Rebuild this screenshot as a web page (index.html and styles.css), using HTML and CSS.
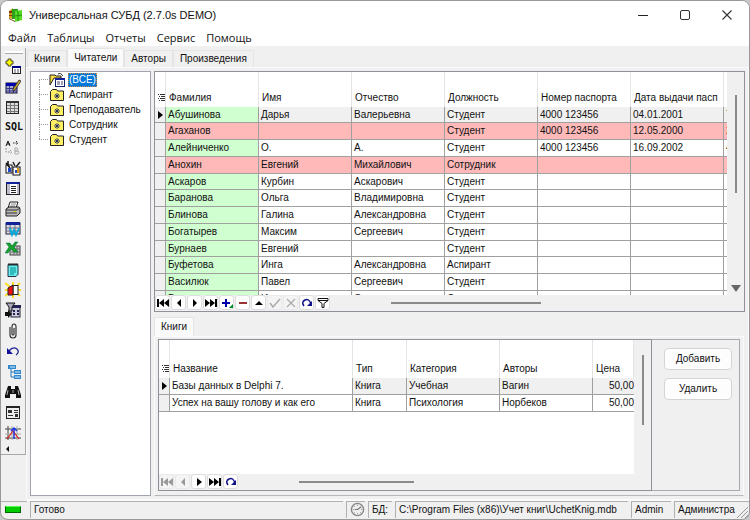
FILE: index.html
```html
<!DOCTYPE html>
<html lang="ru">
<head>
<meta charset="utf-8">
<title>Универсальная СУБД</title>
<link rel="stylesheet" href="styles.css">
</head>
<body>
<div class="window">
  <header class="titlebar">
    <svg class="app-icon" viewBox="0 0 14 14"><path d="M0 3 4 0v11L0 10z" fill="#c9a21a"/><path d="M0 3h4v2H0zM0 7h4v1H0z" fill="#8a2f10"/><path d="M3 1h6v10H3z" fill="#2aa01c"/><path d="M6 3 13 2v10l-7 2z" fill="#55dd22"/><path d="M9 3v10M6 8l7-1" stroke="#1e8a16" stroke-width="1"/><path d="M0 10l6 3v1L0 11z" fill="#7b4a10"/></svg>
    <h1>Универсальная СУБД (2.7.0s DEMO)</h1>
    <div class="window-buttons">
      <button aria-label="Свернуть"><svg viewBox="0 0 10 10"><path d="M0 5.500h10" stroke="#222"/></svg></button>
      <button aria-label="Развернуть"><svg viewBox="0 0 10 10"><rect x=".5" y=".5" width="9" height="9" rx="1.500" fill="none" stroke="#333"/></svg></button>
      <button aria-label="Закрыть"><svg viewBox="0 0 10 10"><path d="M.5.5l9 9M9.500.5l-9 9" stroke="#333" stroke-width="1.100"/></svg></button>
    </div>
  </header>
  <nav class="menu"><button>Файл</button><button>Таблицы</button><button>Отчеты</button><button>Сервис</button><button>Помощь</button></nav>
  <div class="workspace">
    <aside class="toolbar">
      <button aria-label="Добавить запись"><svg viewBox="0 0 16 16"><path d="M3 1h3v2h2v3H6v2H3V6H1V3h2z" fill="#ff0" stroke="#222" stroke-width=".8"/><rect x="7.500" y="8.500" width="8" height="7" fill="#fff" stroke="#222"/><path d="M7 8h9v2H7z" fill="#008"/><path d="M9 12h2M12 12h2M9 14h2M12 14h2" stroke="#556"/></svg></button>
      <button aria-label="Изменить запись"><svg viewBox="0 0 16 16"><rect x="1" y="4" width="11" height="10" fill="#aac" stroke="#113"/><path d="M1 4h11v3H1z" fill="#00a"/><path d="M1 9.500h11M1 12h11M4.500 7v7M8.500 7v7" stroke="#338"/><path d="M8 10 14 1l2 1-6 9-2 1z" fill="#ca3" stroke="#222" stroke-width=".8"/></svg></button>
      <button aria-label="Таблица"><svg viewBox="0 0 16 16"><rect x="1.500" y="2.500" width="12" height="12" fill="#ddd" stroke="#222"/><path d="M1 2h13v2H1z" fill="#333"/><path d="M2 6.500h11M2 9.500h11M2 12.500h11M5.500 4v10M9.500 4v10" stroke="#777"/></svg></button>
      <button class="sql">SQL</button>
      <button aria-label="Замена"><svg viewBox="0 0 16 16"><path d="M1 6 3 1l2 5M2 4h3" fill="none" stroke="#111"/><path d="M8 3h5M11 1l2 2-2 2" stroke="#333" fill="none" stroke-dasharray="1.500 1"/><path d="M1 8v4h5M5 10l2 2-2 2" stroke="#999" fill="none" stroke-dasharray="2 1"/><path d="M10 8v6h3q2-2 0-3h-3 2q2-1 0-3z" fill="none" stroke="#aaa"/></svg></button>
      <button aria-label="Импорт"><svg viewBox="0 0 16 16"><rect x="1" y="5" width="6" height="8" fill="#fff" stroke="#111"/><rect x="8" y="7" width="7" height="8" fill="#fff" stroke="#111"/><path d="M3 1v5M1 3l4 5" stroke="#111" stroke-width="1.500"/><path d="M3 8h3v4H3zM10 10h2v3h-2z" fill="#24c"/><path d="M12 8h2v5h-2z" fill="#d90"/><path d="M8 2l2 4M15 2l-4 5" stroke="#222" stroke-width="1.500"/></svg></button>
      <button aria-label="Форма"><svg viewBox="0 0 16 16"><rect x="1.500" y="2.500" width="13" height="12" fill="#fff" stroke="#222"/><path d="M1 2h14v2H1z" fill="#129"/><path d="M2 4h3v10H2zM12 4h2v10h-2z" fill="#bbc"/><path d="M6 6.500h5M6 8.500h5M6 10.500h5M6 12.500h5" stroke="#222"/></svg></button>
      <button aria-label="Печать"><svg viewBox="0 0 16 16"><path d="M5 1h8l-2 6H3z" fill="#fff" stroke="#222"/><path d="M6 3h5M5 5h5" stroke="#888"/><path d="M1 8l3-2h10l1 2v4l-3 3H1z" fill="#bbb" stroke="#222"/><path d="M1 9h11l3-2M1 12h11" stroke="#333" fill="none"/><path d="M9 10h2v1H9z" fill="#cc0"/></svg></button>
      <button aria-label="Экспорт в Word"><svg viewBox="0 0 16 16"><rect x="1" y="2" width="14" height="11" fill="#ddd" stroke="#224"/><path d="M1 1h14v3H1z" fill="#129"/><path d="M1 7h14M1 10h14M5 4v9M10 4v9" stroke="#668"/><path d="M5 7l2 7 2-5 2 5 3-7" fill="none" stroke="#0ad" stroke-width="1.800"/></svg></button>
      <button aria-label="Экспорт в Excel"><svg viewBox="0 0 16 16"><rect x="5" y="5" width="10" height="9" fill="#ccc" stroke="#444"/><path d="M6 8h9M6 11h9M9 5v9M12 5v9" stroke="#666"/><path d="M1 2h4l2 3 3-4h3L9 6l4 5H9L6 8l-3 4H0l4-6z" fill="#17a02b" stroke="#074" stroke-width=".5"/></svg></button>
      <button aria-label="Блокнот"><svg viewBox="0 0 16 16"><path d="M3 2.500h10v10l-2 2H3z" fill="#6ee" stroke="#234"/><path d="M5 6h6M5 8h6M5 10h6M5 12h4" stroke="#088"/><path d="M4 1v3M6 1v3M8 1v3M10 1v3M12 1v3" stroke="#222"/></svg></button>
      <button aria-label="Выход"><svg viewBox="0 0 16 16"><path d="M0 1l5 4M15 1l-3 3M0 14l4-3M15 14l-3-3M0 8h3M13 8h3M8 0v3M8 16v-3" stroke="#fd2" stroke-width="2"/><rect x="8" y="3.500" width="5" height="9" fill="#fff" stroke="#222"/><path d="M3 6l5-3v10H3z" fill="#e11" stroke="#222"/></svg></button>
      <button aria-label="Фильтр"><svg viewBox="0 0 16 16"><rect x="6" y="4" width="9" height="11" fill="#ccd" stroke="#223"/><path d="M6 3h10v3H6z" fill="#225"/><path d="M8 9h2M12 9h2M8 12h2M12 12h2" stroke="#225" stroke-width="2"/><path d="M1 1h9L7 5v4H4V5z" fill="#aab" stroke="#111"/><path d="M0 10h3V8l4 4-4 4v-2H0z" fill="#111"/></svg></button>
      <button aria-label="Вложение"><svg viewBox="0 0 16 16"><path d="M5 4v8q0 3 3 3t3-3V4q0-3-2-3T7 4v7q0 1 1 1t1-1V5" fill="none" stroke="#333" stroke-width="1.200"/></svg></button>
      <button aria-label="Отменить"><svg viewBox="0 0 16 16"><path d="M4 8q4-5 8-2 3 3-1 6" fill="none" stroke="#229" stroke-width="1.300"/><path d="M2 5v6h6z" fill="#119"/></svg></button>
      <button aria-label="Дерево"><svg viewBox="0 0 16 16"><path d="M6 3v10h3M6 8h3" fill="none" stroke="#27b"/><path d="M3 1h8v4H3zM9 6h7v4H9zM9 11h7v4H9z" fill="#38c"/><path d="M5 3h5M10 8h5M10 13h5" stroke="#cef"/></svg></button>
      <button aria-label="Найти"><svg viewBox="0 0 16 16"><path d="M3 2h3v3h4V2h3l3 9v3h-5v-4H5v4H0v-3z" fill="#111"/><path d="M3 6l-1 5M13 6l1 5M8 6v3" stroke="#aaa"/></svg></button>
      <button aria-label="Свойства"><svg viewBox="0 0 16 16"><rect x="1.500" y="2.500" width="13" height="12" fill="#eee" stroke="#222"/><path d="M1 2h14v2H1z" fill="#222"/><path d="M3 6h4v3H3z" fill="#333"/><path d="M9 6.500h4M9 8.500h4M3 11.500h5" stroke="#333"/><path d="M10 10h3v3h-3z" fill="#333"/></svg></button>
      <button aria-label="График"><svg viewBox="0 0 16 16"><path d="M3 1v14M0 4h16M0 13h16" stroke="#444"/><path d="M0 9h16M7 1v14M12 1v14" stroke="#aaa"/><path d="M2 14l6-8 6 8" fill="none" stroke="#d22" stroke-width="1.200"/><path d="M9 3v11M6 6l3-3 3 3" stroke="#23d" stroke-width="1.500" fill="none"/></svg></button>
      <button class="more" aria-label="Ещё"><svg viewBox="0 0 16 8"><path d="M4 1v6L1 4z" fill="#111"/></svg></button>
    </aside>
    <main class="main">
      <div class="tabs" role="tablist"><button role="tab">Книги</button><button role="tab" class="active" aria-selected="true">Читатели</button><button role="tab">Авторы</button><button role="tab">Произведения</button></div>
      <div class="page">
        <ul class="tree">
          <li class="selected"><svg viewBox="0 0 16 14"><path d="M1 12V2h5l1 1h5v2H5z" fill="#fd4" stroke="#222"/><path d="M9 1q3-2 4 1l1 1" fill="none" stroke="#333"/><rect x="6.500" y="5.500" width="9" height="8" fill="#fff" stroke="#126"/><path d="M6 5h10v2H6z" fill="#129"/><path d="M8 9h3M12 9h2M8 11h3M12 11h2" stroke="#447"/></svg><span>(ВСЕ)</span></li>
          <li><svg viewBox="0 0 16 14"><path d="M1.500 12.500v-9l2-2h4l1 1.500h6v9.500z" fill="#ffef62" stroke="#222"/><path d="M8 5v6M5 8h6M6 6l4 4M10 6l-4 4" stroke="#126" stroke-width=".8"/></svg><span>Аспирант</span></li>
          <li><svg viewBox="0 0 16 14"><path d="M1.500 12.500v-9l2-2h4l1 1.500h6v9.500z" fill="#ffef62" stroke="#222"/><path d="M8 5v6M5 8h6M6 6l4 4M10 6l-4 4" stroke="#126" stroke-width=".8"/></svg><span>Преподаватель</span></li>
          <li><svg viewBox="0 0 16 14"><path d="M1.500 12.500v-9l2-2h4l1 1.500h6v9.500z" fill="#ffef62" stroke="#222"/><path d="M8 5v6M5 8h6M6 6l4 4M10 6l-4 4" stroke="#126" stroke-width=".8"/></svg><span>Сотрудник</span></li>
          <li><svg viewBox="0 0 16 14"><path d="M1.500 12.500v-9l2-2h4l1 1.500h6v9.500z" fill="#ffef62" stroke="#222"/><path d="M8 5v6M5 8h6M6 6l4 4M10 6l-4 4" stroke="#126" stroke-width=".8"/></svg><span>Студент</span></li>
        </ul>
        <div class="content">
          <section class="grid readers">
            <div class="viewport">
              <table>
                <colgroup><col class="mark"><col><col><col><col><col><col><col></colgroup>
                <thead><tr><th><svg class="rows-icon" viewBox="0 0 7 9"><path d="M0 1.500h1M2 1.500h5M1 3.500h1M3 3.500h4M0 5.500h1M2 5.500h5M1 7.500h1M3 7.500h4" stroke="#333"/></svg></th><th>Фамилия</th><th>Имя</th><th>Отчество</th><th>Должность</th><th>Номер паспорта</th><th>Дата выдачи пасп</th><th></th></tr></thead>
                <tbody>
                  <tr class="current"><td><svg class="pointer" viewBox="0 0 5 8"><path d="M0 0l5 4-5 4z"/></svg></td><td>Абушинова</td><td>Дарья</td><td>Валерьевна</td><td>Студент</td><td>4000 123456</td><td>04.01.2001</td><td>7</td></tr>
                  <tr class="debt"><td></td><td>Агаханов</td><td></td><td></td><td>Студент</td><td>4000 123456</td><td>12.05.2000</td><td>2</td></tr>
                  <tr><td></td><td>Алейниченко</td><td>О.</td><td>А.</td><td>Студент</td><td>4000 123456</td><td>16.09.2002</td><td>4</td></tr>
                  <tr class="debt"><td></td><td>Анохин</td><td>Евгений</td><td>Михайлович</td><td>Сотрудник</td><td></td><td></td><td></td></tr>
                  <tr><td></td><td>Аскаров</td><td>Курбин</td><td>Аскарович</td><td>Студент</td><td></td><td></td><td></td></tr>
                  <tr><td></td><td>Баранова</td><td>Ольга</td><td>Владимировна</td><td>Студент</td><td></td><td></td><td></td></tr>
                  <tr><td></td><td>Блинова</td><td>Галина</td><td>Александровна</td><td>Студент</td><td></td><td></td><td></td></tr>
                  <tr><td></td><td>Богатырев</td><td>Максим</td><td>Сергеевич</td><td>Студент</td><td></td><td></td><td></td></tr>
                  <tr><td></td><td>Бурнаев</td><td>Евгений</td><td></td><td>Студент</td><td></td><td></td><td></td></tr>
                  <tr><td></td><td>Буфетова</td><td>Инга</td><td>Александровна</td><td>Аспирант</td><td></td><td></td><td></td></tr>
                  <tr><td></td><td>Василюк</td><td>Павел</td><td>Сергеевич</td><td>Студент</td><td></td><td></td><td></td></tr>
                  <tr><td></td><td>Власова</td><td>Ирина</td><td>Олеговна</td><td>Студент</td><td></td><td></td><td></td></tr>
                </tbody>
              </table>
            </div>
            <div class="vscroll"><span class="thumb"></span><span class="down"></span></div>
            <div class="navigator">
              <button aria-label="Первая"><svg viewBox="0 0 12 10"><path d="M1 1v8" stroke="#000" stroke-width="2"/><path d="M7 1v8L2 5zM12 1v8L7 5z"/></svg></button>
              <button aria-label="Предыдущая"><svg viewBox="0 0 12 10"><path d="M8 1v8L4 5z"/></svg></button>
              <button aria-label="Следующая"><svg viewBox="0 0 12 10"><path d="M4 1v8l4-4z"/></svg></button>
              <button aria-label="Последняя"><svg viewBox="0 0 12 10"><path d="M11 1v8" stroke="#000" stroke-width="2"/><path d="M0 1v8l5-4zM5 1v8l5-4z"/></svg></button>
              <button aria-label="Добавить"><svg viewBox="0 0 12 10"><path d="M5 1v8M1 5h8" stroke="#00a" stroke-width="2"/><path d="M12 6v4H8z" fill="#082"/></svg></button>
              <button aria-label="Удалить"><svg viewBox="0 0 12 10"><path d="M2 5h8" stroke="#933" stroke-width="2"/></svg></button>
              <button aria-label="Изменить"><svg viewBox="0 0 12 10"><path d="M2 7l4-4 4 4z"/></svg></button>
              <button aria-label="Сохранить" disabled><svg viewBox="0 0 12 10"><path d="M1 5l3 4 7-8" fill="none" stroke="#aaa" stroke-width="1.500"/></svg></button>
              <button aria-label="Отменить" disabled><svg viewBox="0 0 12 10"><path d="M2 1l8 8M10 1L2 9" stroke="#aaa" stroke-width="1.200"/></svg></button>
              <button aria-label="Обновить"><svg viewBox="0 0 12 10"><path d="M3 8Q0 4 4 2t6 4" fill="none" stroke="#118" stroke-width="1.500"/><path d="M11 3v5H6z" fill="#118"/></svg></button>
              <button aria-label="Фильтр"><svg viewBox="0 0 12 10"><path d="M1 .5h10v2l-4 3v4H5v-4l-4-3zM1 2.500h10" fill="#fff" stroke="#111"/></svg></button>
              <div class="hscroll"><span></span></div>
            </div>
          </section>
          <section class="details">
            <div class="tabs" role="tablist"><button role="tab" class="active" aria-selected="true">Книги</button></div>
            <div class="details-page">
              <div class="grid books">
                <div class="viewport">
                  <table>
                    <colgroup><col class="mark"><col class="c-name"><col class="c-type"><col><col><col class="c-price"></colgroup>
                    <thead><tr><th><svg class="rows-icon" viewBox="0 0 7 9"><path d="M0 1.500h1M2 1.500h5M1 3.500h1M3 3.500h4M0 5.500h1M2 5.500h5M1 7.500h1M3 7.500h4" stroke="#333"/></svg></th><th>Название</th><th>Тип</th><th>Категория</th><th>Авторы</th><th>Цена</th></tr></thead>
                    <tbody>
                      <tr class="current"><td><svg class="pointer" viewBox="0 0 5 8"><path d="M0 0l5 4-5 4z"/></svg></td><td>Базы данных в Delphi 7.</td><td>Книга</td><td>Учебная</td><td>Вагин</td><td>50,00</td></tr>
                      <tr><td></td><td>Успех на вашу голову и как его</td><td>Книга</td><td>Психология</td><td>Норбеков</td><td>50,00</td></tr>
                    </tbody>
                  </table>
                </div>
                <div class="vscroll"><span class="thumb"></span></div>
                <div class="navigator">
                  <button aria-label="Первая" disabled><svg viewBox="0 0 12 10"><path d="M1 1v8" stroke="#999" stroke-width="2"/><path d="M7 1v8L2 5zM12 1v8L7 5z" fill="#999"/></svg></button>
                  <button aria-label="Предыдущая" disabled><svg viewBox="0 0 12 10"><path d="M8 1v8L4 5z" fill="#999"/></svg></button>
                  <button aria-label="Следующая"><svg viewBox="0 0 12 10"><path d="M4 1v8l5-4z"/></svg></button>
                  <button aria-label="Последняя"><svg viewBox="0 0 12 10"><path d="M11 1v8" stroke="#000" stroke-width="2"/><path d="M0 1v8l5-4zM5 1v8l5-4z"/></svg></button>
                  <button aria-label="Обновить"><svg viewBox="0 0 12 10"><path d="M3 8Q0 4 4 2t6 4" fill="none" stroke="#118" stroke-width="1.500"/><path d="M11 3v5H6z" fill="#118"/></svg></button>
                  <div class="hscroll"><span></span></div>
                </div>
              </div>
              <div class="actions"><button>Добавить</button><button>Удалить</button></div>
            </div>
          </section>
        </div>
      </div>
    </main>
  </div>
  <footer class="status">
    <div class="s-led"><span class="led"></span></div>
    <div class="s-ready">Готово</div>
    <div class="s-clock"><svg viewBox="0 0 16 16"><circle cx="8" cy="8" r="6.500" fill="#eee" stroke="#888" stroke-width="1.500"/><path d="M8 8l4-3M8 8H5" stroke="#777" stroke-width="1.200"/><path d="M8 3v1M8 12v1M3 8h1M12 8h1M4.500 4.500l.7.7M11 11l.7.7M4.500 11.500l.7-.7" stroke="#888"/></svg></div>
    <div class="s-db">БД:</div>
    <div class="s-path">C:\Program Files (x86)\Учет книг\UchetKnig.mdb</div>
    <div class="s-user">Admin</div>
    <div class="s-role">Администра</div>
    <svg class="grip" viewBox="0 0 12 12"><path d="M1 12 12 1M5 12l7-7M9 12l3-3" stroke="#999"/></svg>
  </footer>
</div>
</body>
</html>
```
FILE: styles.css
```css
* { box-sizing: border-box; }
body {
  margin: 0;
  background: #c8c8c8;
  font: 10px/14px "Liberation Sans", Arial, sans-serif;
  color: #111;
}
button {
  margin: 0;
  padding: 0;
  border: 0;
  background: none;
  font: inherit;
  color: inherit;
}
svg { display: block; }

.window {
  display: flex;
  flex-direction: column;
  height: 100vh;
  border: 1px solid #999;
  border-radius: 8px;
  background: #f0f0f0;
  overflow: hidden;
}

.titlebar {
  display: flex;
  align-items: center;
  flex: none;
  height: 27px;
  padding-left: 8px;
  background: #fff;
}
.app-icon { width: 14px; height: 14px; }
.titlebar h1 {
  flex: 1;
  margin: 0 0 0 6px;
  font: 11px/16px "Liberation Sans", Arial, sans-serif;
}
.window-buttons { display: flex; padding-right: 1px; }
.window-buttons button { width: 42px; height: 26px; }
.window-buttons svg { width: 10px; height: 10px; margin: auto; }

.menu {
  display: flex;
  flex: none;
  gap: 11px;
  height: 18px;
  padding-left: 7px;
  background: #fff;
  font: 11px/20px "Open Sans", "Noto Sans", sans-serif;
}

.workspace { display: flex; flex: 1; min-height: 0; }
.toolbar {
  display: flex;
  flex-direction: column;
  justify-content: space-between;
  flex: none;
  width: 25px;
  margin: 2px 0 46px;
  padding: 8px 0 1px 4px;
  border: solid #a8a8a8;
  border-width: 0 1px 1px 0;
}
.toolbar::before {
  content: "";
  height: 2px;
  margin: -5px 2px 0 0;
  border-bottom: 1px solid #aaa;
  background: #fff;
}
.toolbar button { width: 16px; height: 16px; }
.toolbar .sql { width: 17px; font: bold 10px/16px "DejaVu Sans Mono", monospace; }
.toolbar .more { height: 8px; }

.main { display: flex; flex-direction: column; flex: 1; min-width: 0; }
.tabs { display: flex; align-items: flex-end; flex: none; height: 21px; padding: 0 1px; }
.tabs button {
  height: 17px;
  padding: 0 6px;
  border: 1px solid #e4e4e4;
  border-bottom: 0;
  background: #f0f0f0;
  line-height: 16px;
}
.tabs .active { height: 19px; padding: 0 6px; background: #fafafa; }

.page {
  display: flex;
  flex: 1;
  gap: 3px;
  min-height: 0;
  padding: 3px;
  border: solid #fafafa;
  border-width: 1px 1px 2px;
}
.tree {
  flex: none;
  width: 121px;
  margin: 0;
  padding: 0 0 0 8px;
  border: 1px solid #a0a4ac;
  background: #fff;
  list-style: none;
}
.tree li {
  display: flex;
  align-items: center;
  height: 15px;
  padding-left: 10px;
  background:
    repeating-linear-gradient(90deg, #999 0 1px, transparent 1px 2px) 0 7px / 10px 1px no-repeat,
    repeating-linear-gradient(180deg, #999 0 1px, transparent 1px 2px) 0 0 / 1px 100% no-repeat;
}
.tree li:first-child { background-position: 0 7px, 0 8px; }
.tree li:last-child { background-size: 10px 1px, 1px 8px; }
.tree svg { width: 16px; height: 14px; }
.tree span { padding: 0 1px; margin-left: 3px; line-height: 14px; }
.tree .selected span { background: #0078d7; color: #fff; outline: 1px dotted #c84; outline-offset: -1px; }

.content { display: flex; flex-direction: column; flex: 1; min-width: 0; }

.grid {
  display: grid;
  grid-template: minmax(0, 1fr) auto / minmax(0, 1fr) 17px;
  border: 1px solid #8e9198;
  background: #f0f0f0;
}
.readers { flex: 1; min-height: 0; }
.viewport { overflow: hidden; background: #fff; }
table { table-layout: fixed; border-collapse: separate; border-spacing: 0; }
.readers table { width: 662px; }
.books table { width: 475px; }
.mark { width: 11px; }
.c-name { width: 183px; }
.c-type { width: 54px; }
.c-price { width: 41px; }
th {
  padding: 0 0 2px 3px;
  border-right: 1px solid #e4e4e4;
  font-weight: normal;
  text-align: left;
  vertical-align: bottom;
  white-space: nowrap;
}
.readers th { height: 35px; }
.books th { height: 38px; }
td {
  height: 17px;
  padding: 0 0 0 2px;
  border: solid #a0a0a0;
  border-width: 0 1px 1px 0;
  line-height: 14px;
  white-space: nowrap;
}
.readers tr:nth-child(4n + 1) td { height: 16px; }
.books td:last-child { padding: 0; border-right: 0; text-align: right; }
td:first-child { background: #f0f0f0; }
th:first-child, td:first-child { padding-left: 3px; }
.current td { background: #f0f0f0; }
.books .current td:nth-child(2) { background: #fff; }
.readers td:nth-child(2) { background: #d0ffd0; }
.readers .debt td:not(:first-child) { background: #ffb9b9; }
.rows-icon { width: 7px; height: 9px; margin-bottom: 3px; }
.pointer { width: 5px; height: 8px; }

.vscroll { display: flex; flex-direction: column; align-items: center; justify-content: space-between; padding: 23px 0 3px; }
.vscroll .thumb { width: 2px; height: 98px; background: #8a8a8a; }
.books .vscroll { padding-top: 15px; }
.books .vscroll .thumb { height: 70px; }
.down { border: solid transparent; border-width: 7px 5px 0; border-top-color: #666; }

.navigator { display: flex; grid-column: 1 / -1; gap: 1px; height: 16px; }
.navigator button {
  display: flex;
  align-items: center;
  justify-content: center;
  width: 15px;
  height: 15px;
  border: 1px solid #ddd;
  border-radius: 3px;
  background: #fff;
}
.navigator button:disabled { background: #f4f4f4; border-color: #eaeaea; }
.navigator svg { flex: none; width: 12px; height: 10px; }
.hscroll { display: flex; align-items: center; flex: 1; padding-left: 60px; }
.hscroll span { width: 150px; height: 2px; background: #8a8a8a; }
.books .hscroll span { width: 115px; }

.details { display: flex; flex-direction: column; flex: none; height: 184px; }
.details .tabs { height: 24px; padding: 0; }
.details-page {
  display: flex;
  flex: 1;
  min-height: 0;
  margin-right: 1px;
  padding: 2px 3px 4px;
  border: 1px solid #fafafa;
  border-bottom-color: #b8b8bc;
}
.books { flex: 1; min-width: 0; }
.actions {
  display: flex;
  flex-direction: column;
  gap: 8px;
  width: 88px;
  padding: 8px 7px 0 12px;
  border: solid #a8a8b0;
  border-width: 1px 1px 1px 0;
}
.actions button { height: 22px; border: 1px solid #d4d4d4; border-radius: 4px; background: #fdfdfd; }

.status { position: relative; display: flex; flex: none; gap: 3px; height: 18px; padding-bottom: 1px; }
.status > div {
  overflow: hidden;
  padding-left: 3px;
  border: solid #b0b0b0;
  border-width: 1px 0 0 1px;
  line-height: 16px;
  white-space: nowrap;
}
.status .s-led { width: 26px; padding: 4px 0 0 4px; border-left: 0; }
.led { display: block; width: 16px; height: 7px; border: 1px solid #060; border-top-color: #5f5; background: #0c0; }
.status .s-ready { flex: 1; }
.s-clock { width: 19px; }
.s-clock svg { width: 15px; height: 15px; }
.s-db { width: 24px; }
.s-path { width: 233px; }
.s-user { width: 40px; }
.s-role { width: 75px; }
.grip { position: absolute; right: 1px; bottom: 1px; width: 12px; height: 12px; }
```
